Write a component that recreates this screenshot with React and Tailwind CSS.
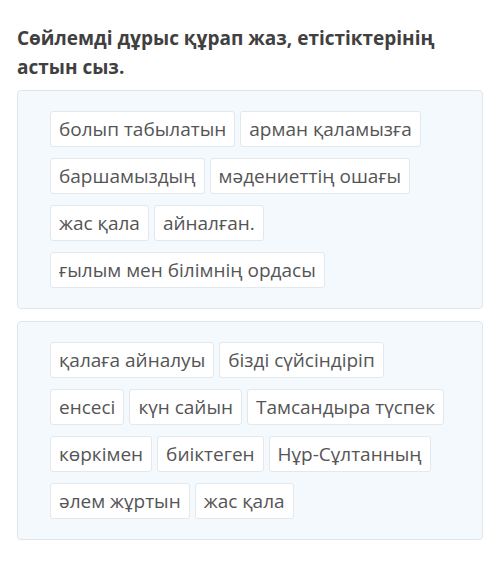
const groups = [
  ['болып табылатын', 'арман қаламызға', 'баршамыздың', 'мәдениеттің ошағы', 'жас қала', 'айналған.', 'ғылым мен білімнің ордасы'],
  ['қалаға айналуы', 'бізді сүйсіндіріп', 'енсесі', 'күн сайын', 'Тамсандыра түспек', 'көркімен', 'биіктеген', 'Нұр-Сұлтанның', 'әлем жұртын', 'жас қала'],
];

function Chip({ text }) {
  return (
    <div className="h-[36px] flex items-center px-[8px] bg-white border border-[#e2e8ec] rounded-[3px] text-[19px] text-[#555] leading-none">
      {text}
    </div>
  );
}

export default function App() {
  return (
    <div className="w-[500px] h-[577px] bg-white px-[17px] pt-[24px]" style={{ fontFamily: '"Open Sans", sans-serif' }}>
      <h1 className="text-[19px] font-bold text-[#404040] leading-[29px]">
        Сөйлемді дұрыс құрап жаз, етістіктерінің астын сыз.
      </h1>
      <div className="mt-[8px] flex flex-col gap-[12px]">
        {groups.map((words, i) => (
          <div key={i} className="bg-[#f3f9fc] border border-[#dfe6ea] rounded-[4px] pl-[32px] pr-[20px] py-[20px] flex flex-wrap gap-x-[5px] gap-y-[11px]">
            {words.map((w, j) => (
              <Chip key={j} text={w} />
            ))}
          </div>
        ))}
      </div>
    </div>
  );
}
